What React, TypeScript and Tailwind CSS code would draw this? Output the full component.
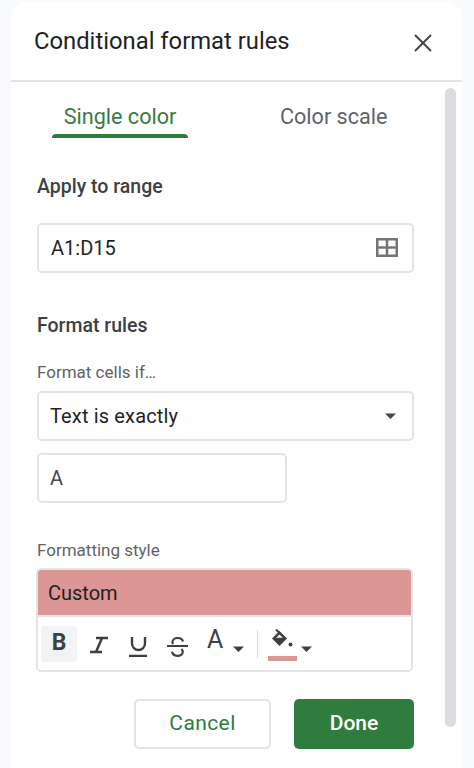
import { X } from "lucide-react";

function Caret({ className }: { className: string }) {
  return (
    <svg viewBox="0 0 11 6" className={className} fill="currentColor">
      <path d="M0 0.500h11L5.500 6z" />
    </svg>
  );
}

function FieldBox({ width, children }: { width: string; children: React.ReactNode }) {
  return (
    <div className={`flex h-[50px] items-center justify-between rounded-[5px] border-2 border-[#e3e4e6] bg-white ${width}`}>
      {children}
    </div>
  );
}

export default function App() {
  return (
    <div className="h-[768px] w-[474px] overflow-hidden bg-[#f8fafd] pl-[11px] pr-[12px] pt-[2px] font-['Roboto',sans-serif]">
      <div className="h-[766px] rounded-t-2xl bg-white">
        {/* Header */}
        <div className="flex h-[80px] items-center justify-between border-b-2 border-[#e3e4e6] pl-[23px] pr-[24px]">
          <h1 className="pt-[2px] text-[23.800px] leading-none text-[#1f1f1f]">Conditional format rules</h1>
          <X className="mt-[3px] h-[30px] w-[30px] text-[#444746]" strokeWidth={1.500} />
        </div>

        <div className="relative pl-[26px] pt-[1px]">
          {/* Scrollbar */}
          <div className="absolute right-[6px] top-[6px] h-[639px] w-[11px] rounded-md bg-[#dadce0]" />

          {/* Tabs */}
          <div className="flex h-[55px] text-[21.600px] leading-none">
            <div className="relative ml-[15px] flex w-[136px] justify-center pt-[23px] text-[#3a7a45]">
              Single color
              <div className="absolute bottom-0 left-0 h-[4px] w-[136px] rounded-t-[4px] bg-[#2e7d3e]" />
            </div>
            <div className="ml-[92px] pt-[23px] text-[#5f6368]">Color scale</div>
          </div>

          {/* Apply to range */}
          <h2 className="mt-[39px] text-[19.500px] font-medium leading-none text-[#3c4043]">Apply to range</h2>
          <div className="mt-[26px]">
            <FieldBox width="w-[377px]">
              <span className="pl-[12px] text-[20px] text-[#1f1f1f]">A1:D15</span>
              <svg viewBox="0 0 22 19" className="mr-[14px] h-[19px] w-[22px]" fill="none" stroke="#757575" strokeWidth="2.500">
                <rect x="1.250" y="1.250" width="19.500" height="16.500" />
                <path d="M11 1.250v16.500M1.250 9.500h19.500" />
              </svg>
            </FieldBox>
          </div>

          {/* Format rules */}
          <h2 className="mt-[43px] text-[19.500px] font-medium leading-none text-[#3c4043]">Format rules</h2>
          <div className="mt-[29px] text-[17px] leading-none text-[#5f6368]">Format cells if…</div>
          <div className="mt-[10px]">
            <FieldBox width="w-[377px]">
              <span className="pl-[11px] text-[20px] tracking-[0.150px] text-[#1f1f1f]">Text is exactly</span>
              <Caret className="mr-[16px] h-[6px] w-[11px] text-[#444746]" />
            </FieldBox>
          </div>
          <div className="mt-[12px]">
            <FieldBox width="w-[250px]">
              <span className="pl-[11px] text-[20px] text-[#444746]">A</span>
            </FieldBox>
          </div>

          {/* Formatting style */}
          <div className="mt-[39px] text-[17px] leading-none text-[#5f6368]">Formatting style</div>
          <div className="-ml-[1px] mt-[9px] w-[377px] overflow-hidden rounded-[5px] border-2 border-[#e3e4e6]">
            <div className="flex h-[47px] items-center border-b-2 border-[#e3e4e6] bg-[#dc9696] pl-[10px] text-[20px] text-[#1f1f1f]">
              Custom
            </div>
            <div className="flex h-[53px] items-center bg-white pl-[3px]">
              <div className="flex h-[36px] w-[36px] items-center justify-center rounded-[3px] bg-[#f1f3f4] text-[23px] font-bold text-[#3c4043]">B</div>
              <svg viewBox="0 0 24 26" className="ml-[10px] h-[26px] w-[24px]" fill="none" stroke="#3c4043" strokeWidth="2.500">
                <path d="M9 7h12M3 21h12M15 7L9 21" />
              </svg>
              <svg viewBox="0 0 24 26" className="ml-[15px] h-[26px] w-[24px]" fill="none" stroke="#3c4043" strokeWidth="2.400">
                <path d="M6 6v6.500a6.500 6.500 0 0 0 13 0V6" />
                <path d="M3 25h18" />
              </svg>
              <svg viewBox="0 0 24 26" className="ml-[15px] h-[26px] w-[24px]" fill="none" stroke="#3c4043" strokeWidth="2.200">
                <path d="M2 15h21" />
                <path d="M18 10.500c-.5-2.500-3-3.500-5.500-3.500S7.500 8.500 7.500 11c0 .8.2 1.500.6 2M16.500 18c1 1 1.300 1.800 1.300 2.800 0 2.500-2.500 4-5.300 4s-5-1.500-5.500-4" />
              </svg>
              <span className="ml-[18px] pb-[8px] text-[25px] leading-none text-[#3c4043]">A</span>
              <Caret className="ml-[10px] mt-[11px] h-[6px] w-[11px] text-[#3c4043]" />
              <div className="ml-[13px] h-[28px] w-[1px] bg-[#dadce0]" />
              <div className="ml-[10px] mt-[3px] flex h-[32px] w-[29px] flex-col justify-between">
                <svg viewBox="0 0 21 19" className="ml-[4px] h-[19px] w-[21px]">
                  <path d="M7.500 2L0 9.500 7.500 17 15 9.500z" fill="#3c4043" />
                  <path d="M7.500 5.500L4.200 8.800h6.600z" fill="#ffffff" />
                  <path d="M4 0.500L8 4.500" stroke="#3c4043" strokeWidth="2" fill="none" />
                  <circle cx="18.500" cy="15.500" r="2" fill="#3c4043" />
                </svg>
                <div className="h-[5px] w-[29px] bg-[#dc9696]" />
              </div>
              <Caret className="ml-[4px] mt-[11px] h-[6px] w-[11px] text-[#3c4043]" />
            </div>
          </div>

          {/* Actions */}
          <div className="mt-[27px] flex w-[377px] justify-end gap-[23px]">
            <button type="button" className="h-[50px] w-[137px] rounded-[5px] border-2 border-[#e3e4e6] bg-white text-[21px] tracking-[0.400px] text-[#2e7d3e] [font-weight:450]">Cancel</button>
            <button type="button" className="h-[50px] w-[120px] rounded-[5px] bg-[#2e7d3e] text-[21px] text-white [font-weight:500]">Done</button>
          </div>
        </div>
      </div>
    </div>
  );
}
